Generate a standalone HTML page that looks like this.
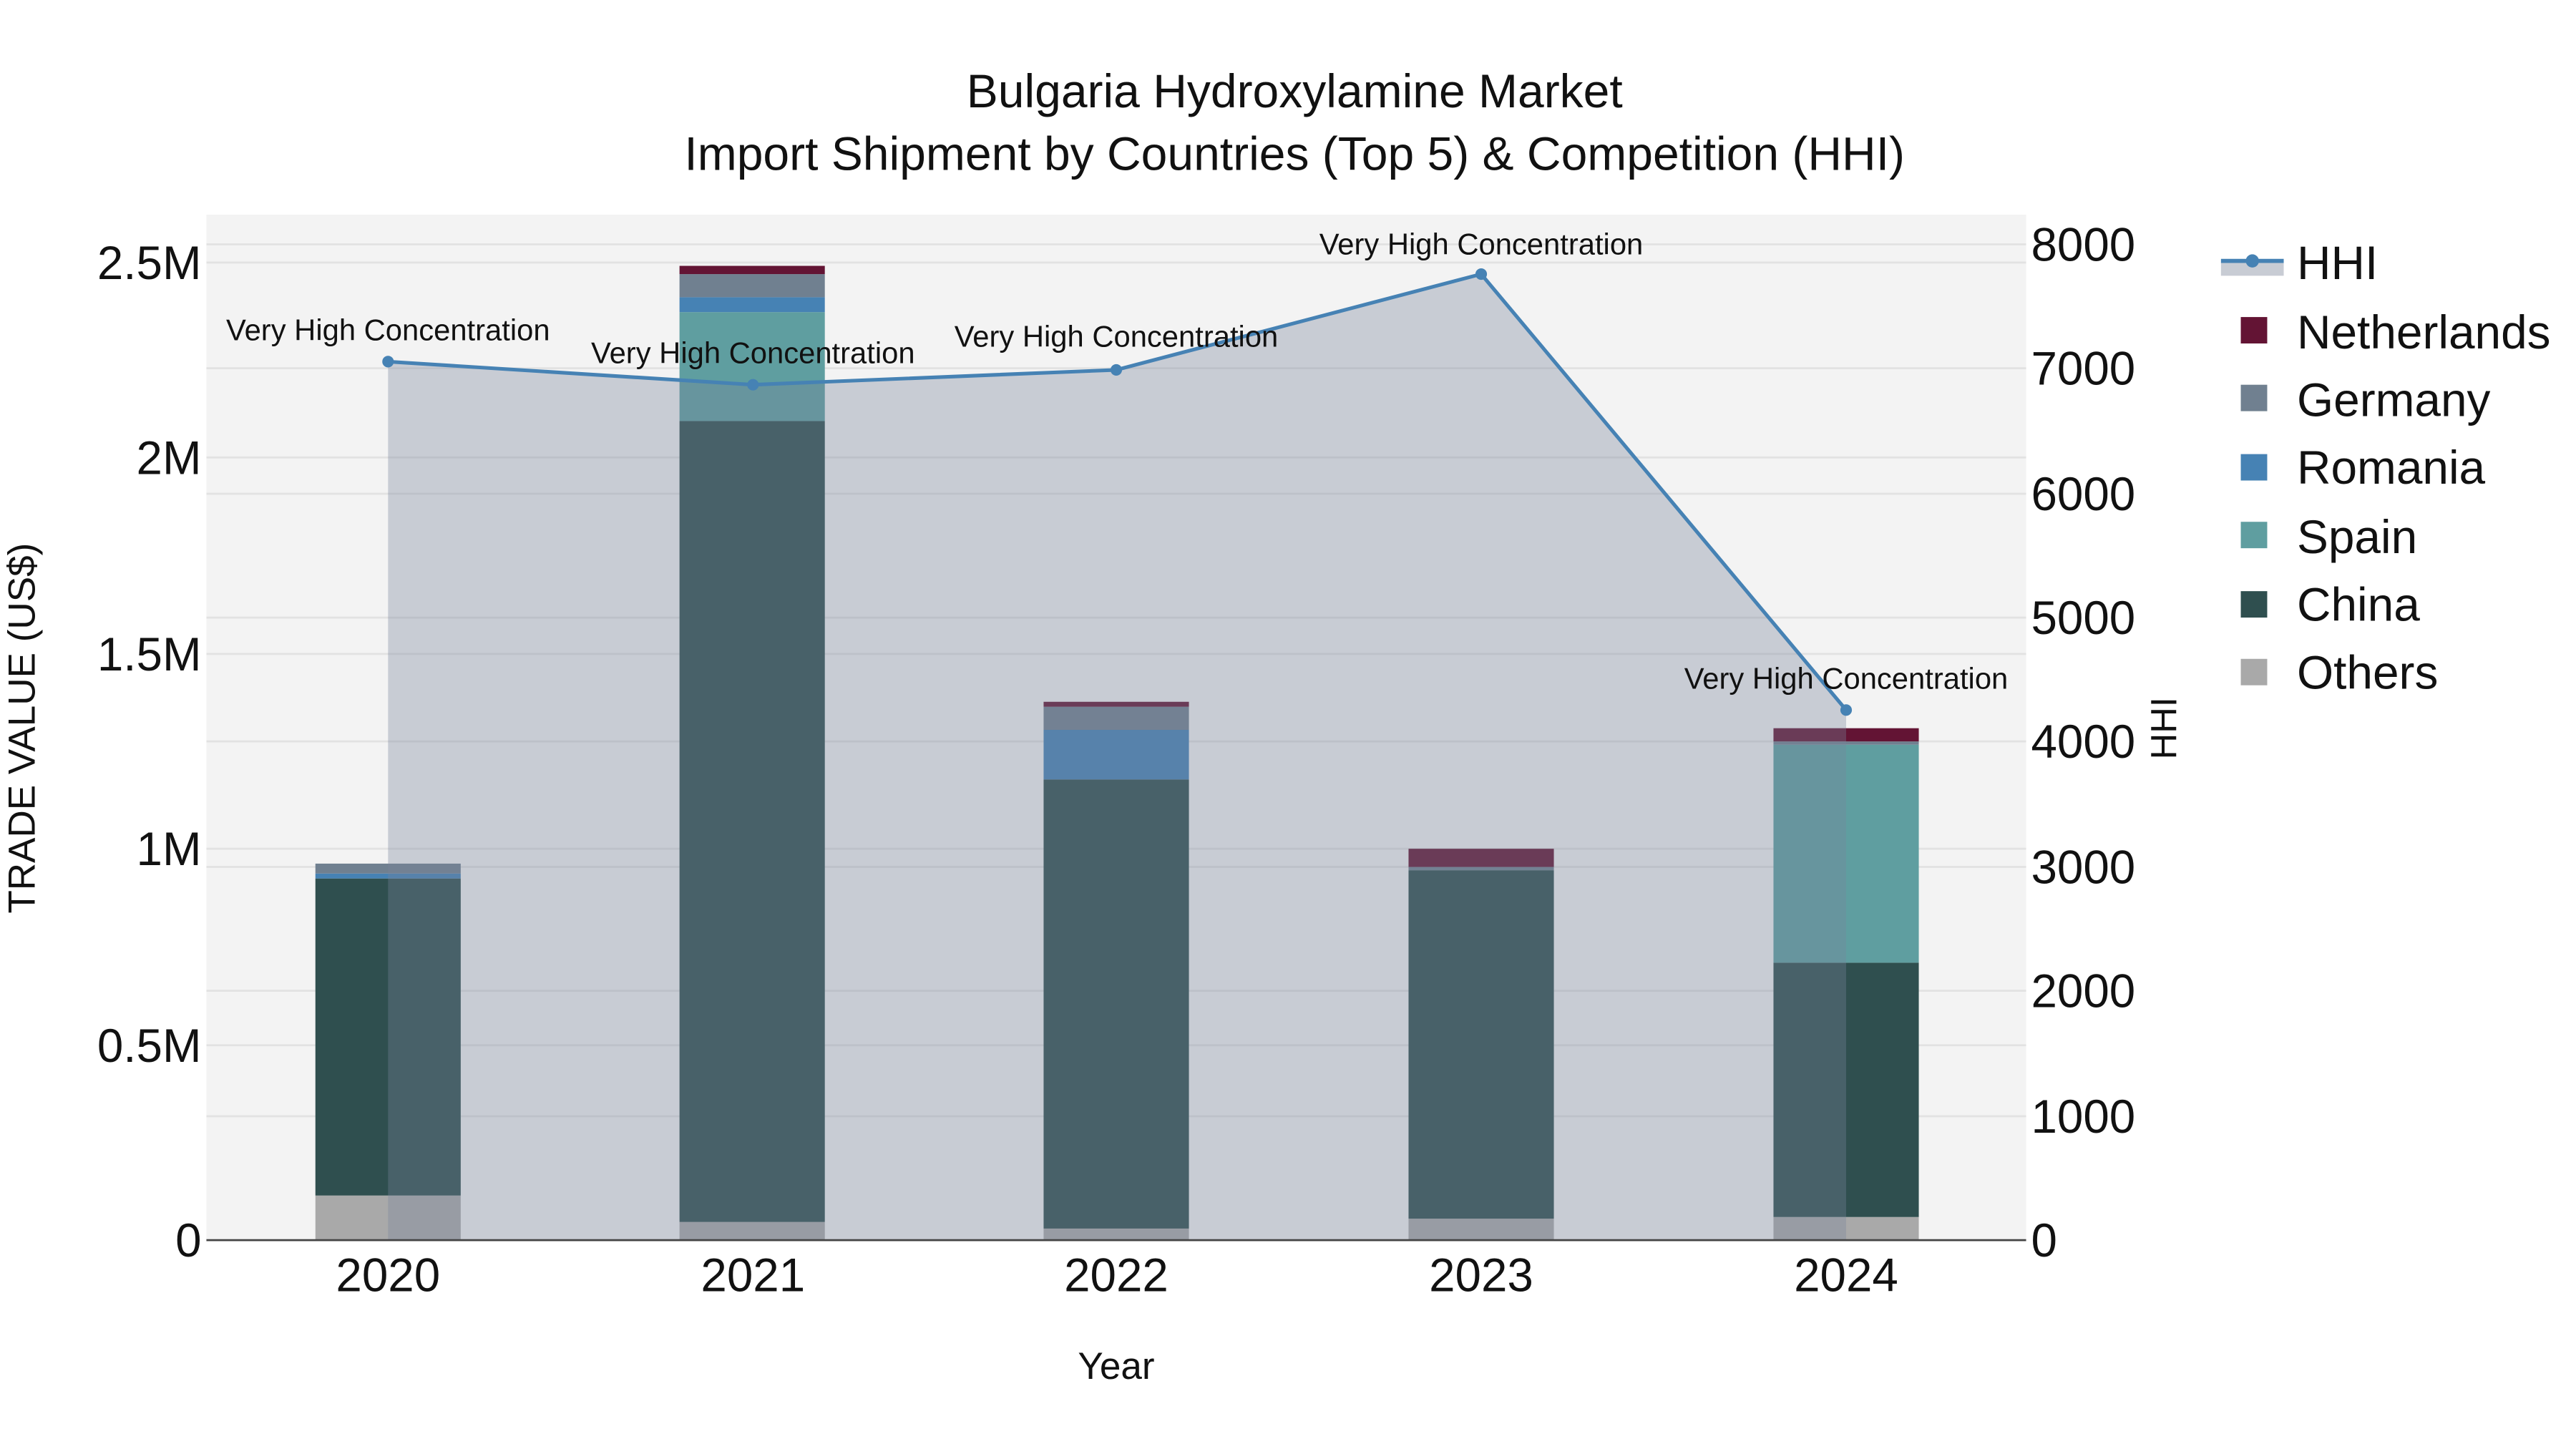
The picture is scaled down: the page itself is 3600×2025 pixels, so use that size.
<!DOCTYPE html>
<html><head><meta charset="utf-8"><style>
html,body{margin:0;padding:0;background:#fff;}
svg{display:block;}
text{font-family:"Liberation Sans",Arial,sans-serif;fill:#111;}
</style></head><body>
<svg width="3600" height="2025" viewBox="0 0 1560 877.5" xmlns="http://www.w3.org/2000/svg">
<rect x="0" y="0" width="1560" height="877.5" fill="#fff"/>
<rect x="125" y="130" width="1102" height="621" fill="#f3f3f3"/>
<g stroke="#e2e2e2" stroke-width="1.2">
<line x1="125" x2="1227" y1="633" y2="633"/><line x1="125" x2="1227" y1="514" y2="514"/>
<line x1="125" x2="1227" y1="396" y2="396"/><line x1="125" x2="1227" y1="277" y2="277"/>
<line x1="125" x2="1227" y1="159" y2="159"/>
<line x1="125" x2="1227" y1="676" y2="676"/><line x1="125" x2="1227" y1="600" y2="600"/>
<line x1="125" x2="1227" y1="525" y2="525"/><line x1="125" x2="1227" y1="449" y2="449"/>
<line x1="125" x2="1227" y1="374" y2="374"/><line x1="125" x2="1227" y1="299" y2="299"/>
<line x1="125" x2="1227" y1="223" y2="223"/><line x1="125" x2="1227" y1="148" y2="148"/>
</g>
<g>
<rect x="191" y="724" width="88" height="27" fill="#a9a9a9"/>
<rect x="191" y="532" width="88" height="192" fill="#2f4f4f"/>
<rect x="191" y="529" width="88" height="3" fill="#4682b4"/>
<rect x="191" y="523" width="88" height="6" fill="#708090"/>

<rect x="411.5" y="740" width="88" height="11" fill="#a9a9a9"/>
<rect x="411.5" y="255" width="88" height="485" fill="#2f4f4f"/>
<rect x="411.5" y="189" width="88" height="66" fill="#5f9ea0"/>
<rect x="411.5" y="180" width="88" height="9" fill="#4682b4"/>
<rect x="411.5" y="166" width="88" height="14" fill="#708090"/>
<rect x="411.5" y="161" width="88" height="5" fill="#631434"/>

<rect x="632" y="744" width="88" height="7" fill="#a9a9a9"/>
<rect x="632" y="472" width="88" height="272" fill="#2f4f4f"/>
<rect x="632" y="442" width="88" height="30" fill="#4682b4"/>
<rect x="632" y="428" width="88" height="14" fill="#708090"/>
<rect x="632" y="425" width="88" height="3" fill="#631434"/>

<rect x="853" y="738" width="88" height="13" fill="#a9a9a9"/>
<rect x="853" y="527" width="88" height="211" fill="#2f4f4f"/>
<rect x="853" y="525" width="88" height="2" fill="#708090"/>
<rect x="853" y="514" width="88" height="11" fill="#631434"/>

<rect x="1074" y="737" width="88" height="14" fill="#a9a9a9"/>
<rect x="1074" y="583" width="88" height="154" fill="#2f4f4f"/>
<rect x="1074" y="451" width="88" height="132" fill="#5f9ea0"/>
<rect x="1074" y="449" width="88" height="2" fill="#708090"/>
<rect x="1074" y="441" width="88" height="8" fill="#631434"/>
</g>
<polygon points="235,751 235,219 456,233 676,224 897,166 1118,430 1118,751" fill="rgb(120,131,154)" fill-opacity="0.35"/>
<line x1="125" x2="1227" y1="751" y2="751" stroke="#444" stroke-width="1.2"/>
<polyline points="235,219 456,233 676,224 897,166 1118,430" fill="none" stroke="#4682b4" stroke-width="2.2"/>
<g fill="#4682b4">
<circle cx="235" cy="219" r="3.5"/><circle cx="456" cy="233" r="3.5"/><circle cx="676" cy="224" r="3.5"/>
<circle cx="897" cy="166" r="3.5"/><circle cx="1118" cy="430" r="3.5"/>
</g>
<g font-size="18.1" text-anchor="middle">
<text x="235" y="206">Very High Concentration</text>
<text x="456" y="220">Very High Concentration</text>
<text x="676" y="210">Very High Concentration</text>
<text x="897" y="154">Very High Concentration</text>
<text x="1118" y="417">Very High Concentration</text>
</g>
<g font-size="28.6" text-anchor="middle">
<text x="784" y="65">Bulgaria Hydroxylamine Market</text>
<text x="784" y="103">Import Shipment by Countries (Top 5) &amp; Competition (HHI)</text>
</g>
<g font-size="28.4" text-anchor="end">
<text x="122" y="761">0</text><text x="122" y="643">0.5M</text><text x="122" y="524">1M</text>
<text x="122" y="406">1.5M</text><text x="122" y="287">2M</text><text x="122" y="169">2.5M</text>
</g>
<g font-size="28.4" text-anchor="start">
<text x="1230" y="761">0</text><text x="1230" y="686">1000</text><text x="1230" y="610">2000</text>
<text x="1230" y="535">3000</text><text x="1230" y="459">4000</text><text x="1230" y="384">5000</text>
<text x="1230" y="309">6000</text><text x="1230" y="233">7000</text><text x="1230" y="158">8000</text>
</g>
<g font-size="28.4" text-anchor="middle">
<text x="235" y="782">2020</text><text x="456" y="782">2021</text><text x="676" y="782">2022</text>
<text x="897" y="782">2023</text><text x="1118" y="782">2024</text>
</g>
<text x="676" y="835" font-size="23" text-anchor="middle">Year</text>
<text transform="translate(21,441) rotate(-90)" font-size="23" text-anchor="middle">TRADE VALUE (US$)</text>
<text transform="translate(1318,441) rotate(-90)" font-size="22" text-anchor="middle">HHI</text>
<rect x="1345" y="159" width="38" height="8" fill="#c8ccd4"/>
<line x1="1345" x2="1383" y1="158" y2="158" stroke="#4682b4" stroke-width="2.5"/>
<circle cx="1364" cy="158" r="4" fill="#4682b4"/>
<g font-size="28.5">
<text x="1391" y="169">HHI</text>
<text x="1391" y="211">Netherlands</text>
<text x="1391" y="252">Germany</text>
<text x="1391" y="293">Romania</text>
<text x="1391" y="335">Spain</text>
<text x="1391" y="376">China</text>
<text x="1391" y="417">Others</text>
</g>
<rect x="1357" y="192" width="16" height="16" fill="#631434"/>
<rect x="1357" y="233" width="16" height="16" fill="#708090"/>
<rect x="1357" y="275" width="16" height="16" fill="#4682b4"/>
<rect x="1357" y="316" width="16" height="16" fill="#5f9ea0"/>
<rect x="1357" y="358" width="16" height="16" fill="#2f4f4f"/>
<rect x="1357" y="399" width="16" height="16" fill="#a9a9a9"/>
</svg>
</body></html>
